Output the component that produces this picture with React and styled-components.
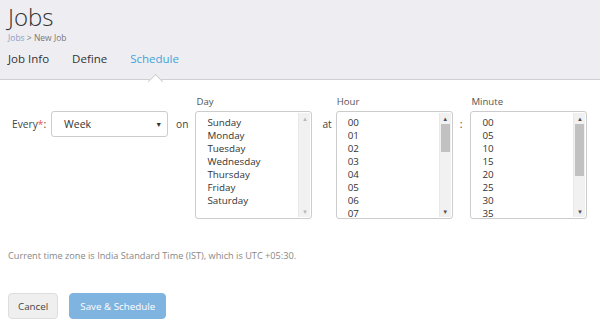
import React from "react";
import styled, { createGlobalStyle } from "styled-components";

const Global = createGlobalStyle`
  body {
    margin: 0;
    background: #fff;
    font-family: "Open Sans", "Noto Sans", sans-serif;
    color: #333;
  }
`;

const Header = styled.div`
  background: #eeeef2;
  border-bottom: 1px solid #cfcfd2;
  padding: 4px 8px 0;
  height: 75px;
  box-sizing: content-box;
`;

const Title = styled.h1`
  margin: 0;
  font-size: 24px;
  font-weight: 300;
  line-height: 26px;
  color: #333;
`;

const Crumbs = styled.div`
  font-size: 8.5px;
  color: #777;
  line-height: 10px;
  margin-top: 3px;
`;

const CrumbLink = styled.span`
  color: #8b9bc6;
`;

const Tabs = styled.div`
  display: flex;
  gap: 23px;
  margin-top: 6px;
`;

const Tab = styled.div`
  position: relative;
  font-size: 11.5px;
  line-height: 20px;
  color: ${(p) => (p.active ? "#41a3d9" : "#333")};
`;

const Notch = styled.div`
  position: absolute;
  left: 50%;
  bottom: -18px;
  width: 10px;
  height: 10px;
  margin-left: -5px;
  background: #fff;
  border-left: 1px solid #cfcfd2;
  border-top: 1px solid #cfcfd2;
  transform: rotate(45deg);
`;

const Form = styled.div`
  display: flex;
  align-items: flex-start;
  padding: 16px 0 0 12px;
`;

const InlineLabel = styled.div`
  font-size: 10.2px;
  line-height: 14px;
  color: #444;
  margin-top: 21px;
  margin-right: ${(p) => p.gap}px;
`;

const Req = styled.span`
  color: #e55;
`;

const SelectBox = styled.div`
  width: 117px;
  height: 26px;
  box-sizing: border-box;
  border: 1px solid #ccc;
  border-radius: 3px;
  display: flex;
  align-items: center;
  justify-content: space-between;
  padding: 0 5px 0 12px;
  font-size: 10.5px;
  color: #333;
  margin-top: 15px;
  margin-right: 8px;
`;

const Caret = styled.span`
  font-size: 7px;
  color: #333;
`;

const Field = styled.div`
  display: flex;
  flex-direction: column;
  margin-right: ${(p) => p.gap}px;
`;

const FieldLabel = styled.div`
  font-size: 9.6px;
  line-height: 12px;
  color: #555;
  margin-left: 1px;
  margin-bottom: 3px;
`;

const ListBox = styled.div`
  width: 117px;
  height: 108px;
  box-sizing: border-box;
  border: 1px solid #ccc;
  border-radius: 3px;
  display: flex;
  overflow: hidden;
`;

const Items = styled.div`
  flex: 1;
  padding: 4px 0 0 11px;
  overflow: hidden;
`;

const Item = styled.div`
  font-size: 9.8px;
  line-height: 13px;
  color: #333;
  white-space: nowrap;
`;

const Track = styled.div`
  width: 11px;
  margin: 1px 1px 1px 0;
  background: #f1f1f1;
  border-left: 1px solid #e8e8e8;
  display: flex;
  flex-direction: column;
  align-items: center;
`;

const Arrow = styled.div`
  height: 11px;
  display: flex;
  align-items: center;
  justify-content: center;
  font-size: 6px;
  color: ${(p) => (p.dim ? "#b8b8b8" : "#505050")};
`;

const ThumbArea = styled.div`
  flex: 1;
  width: 100%;
`;

const Thumb = styled.div`
  width: 9px;
  margin: 0 auto;
  background: #c1c1c1;
`;

const Note = styled.div`
  font-size: 9.2px;
  color: #888;
  padding: 30px 0 0 8px;
`;

const Buttons = styled.div`
  display: flex;
  gap: 11px;
  padding: 31px 0 0 8px;
`;

const Button = styled.button`
  height: 26px;
  border-radius: 4px;
  font-family: inherit;
  font-size: 9.8px;
  padding: 0 ${(p) => (p.primary ? 10 : 9)}px;
  border: 1px solid ${(p) => (p.primary ? "#7fb3e0" : "#ddd")};
  background: ${(p) => (p.primary ? "#7fb3e0" : "#efefef")};
  color: ${(p) => (p.primary ? "#fff" : "#444")};
`;

function List({ items, thumb }) {
  return (
    <ListBox>
      <Items>
        {items.map((i) => (
          <Item key={i}>{i}</Item>
        ))}
      </Items>
      <Track>
        <Arrow dim={!thumb}>▲</Arrow>
        <ThumbArea>
          {thumb ? <Thumb style={{ height: thumb }} /> : null}
        </ThumbArea>
        <Arrow dim={!thumb}>▼</Arrow>
      </Track>
    </ListBox>
  );
}

const days = ["Sunday", "Monday", "Tuesday", "Wednesday", "Thursday", "Friday", "Saturday"];
const hours = ["00", "01", "02", "03", "04", "05", "06", "07"];
const minutes = ["00", "05", "10", "15", "20", "25", "30", "35"];

export default function App() {
  return (
    <>
      <Global />
      <Header>
        <Title>Jobs</Title>
        <Crumbs>
          <CrumbLink>Jobs</CrumbLink> &gt; New Job
        </Crumbs>
        <Tabs>
          <Tab>Job Info</Tab>
          <Tab>Define</Tab>
          <Tab active>
            Schedule
            <Notch />
          </Tab>
        </Tabs>
      </Header>
      <Form>
        <InlineLabel gap={5}>
          Every<Req>*</Req>:
        </InlineLabel>
        <SelectBox>
          Week
          <Caret>▼</Caret>
        </SelectBox>
        <InlineLabel gap={7}>on</InlineLabel>
        <Field gap={10}>
          <FieldLabel>Day</FieldLabel>
          <List items={days} />
        </Field>
        <InlineLabel gap={4}>at</InlineLabel>
        <Field gap={7}>
          <FieldLabel>Hour</FieldLabel>
          <List items={hours} thumb={28} />
        </Field>
        <InlineLabel gap={8}>:</InlineLabel>
        <Field gap={0}>
          <FieldLabel>Minute</FieldLabel>
          <List items={minutes} thumb={52} />
        </Field>
      </Form>
      <Note>Current time zone is India Standard Time (IST), which is UTC +05:30.</Note>
      <Buttons>
        <Button>Cancel</Button>
        <Button primary>Save &amp; Schedule</Button>
      </Buttons>
    </>
  );
}
